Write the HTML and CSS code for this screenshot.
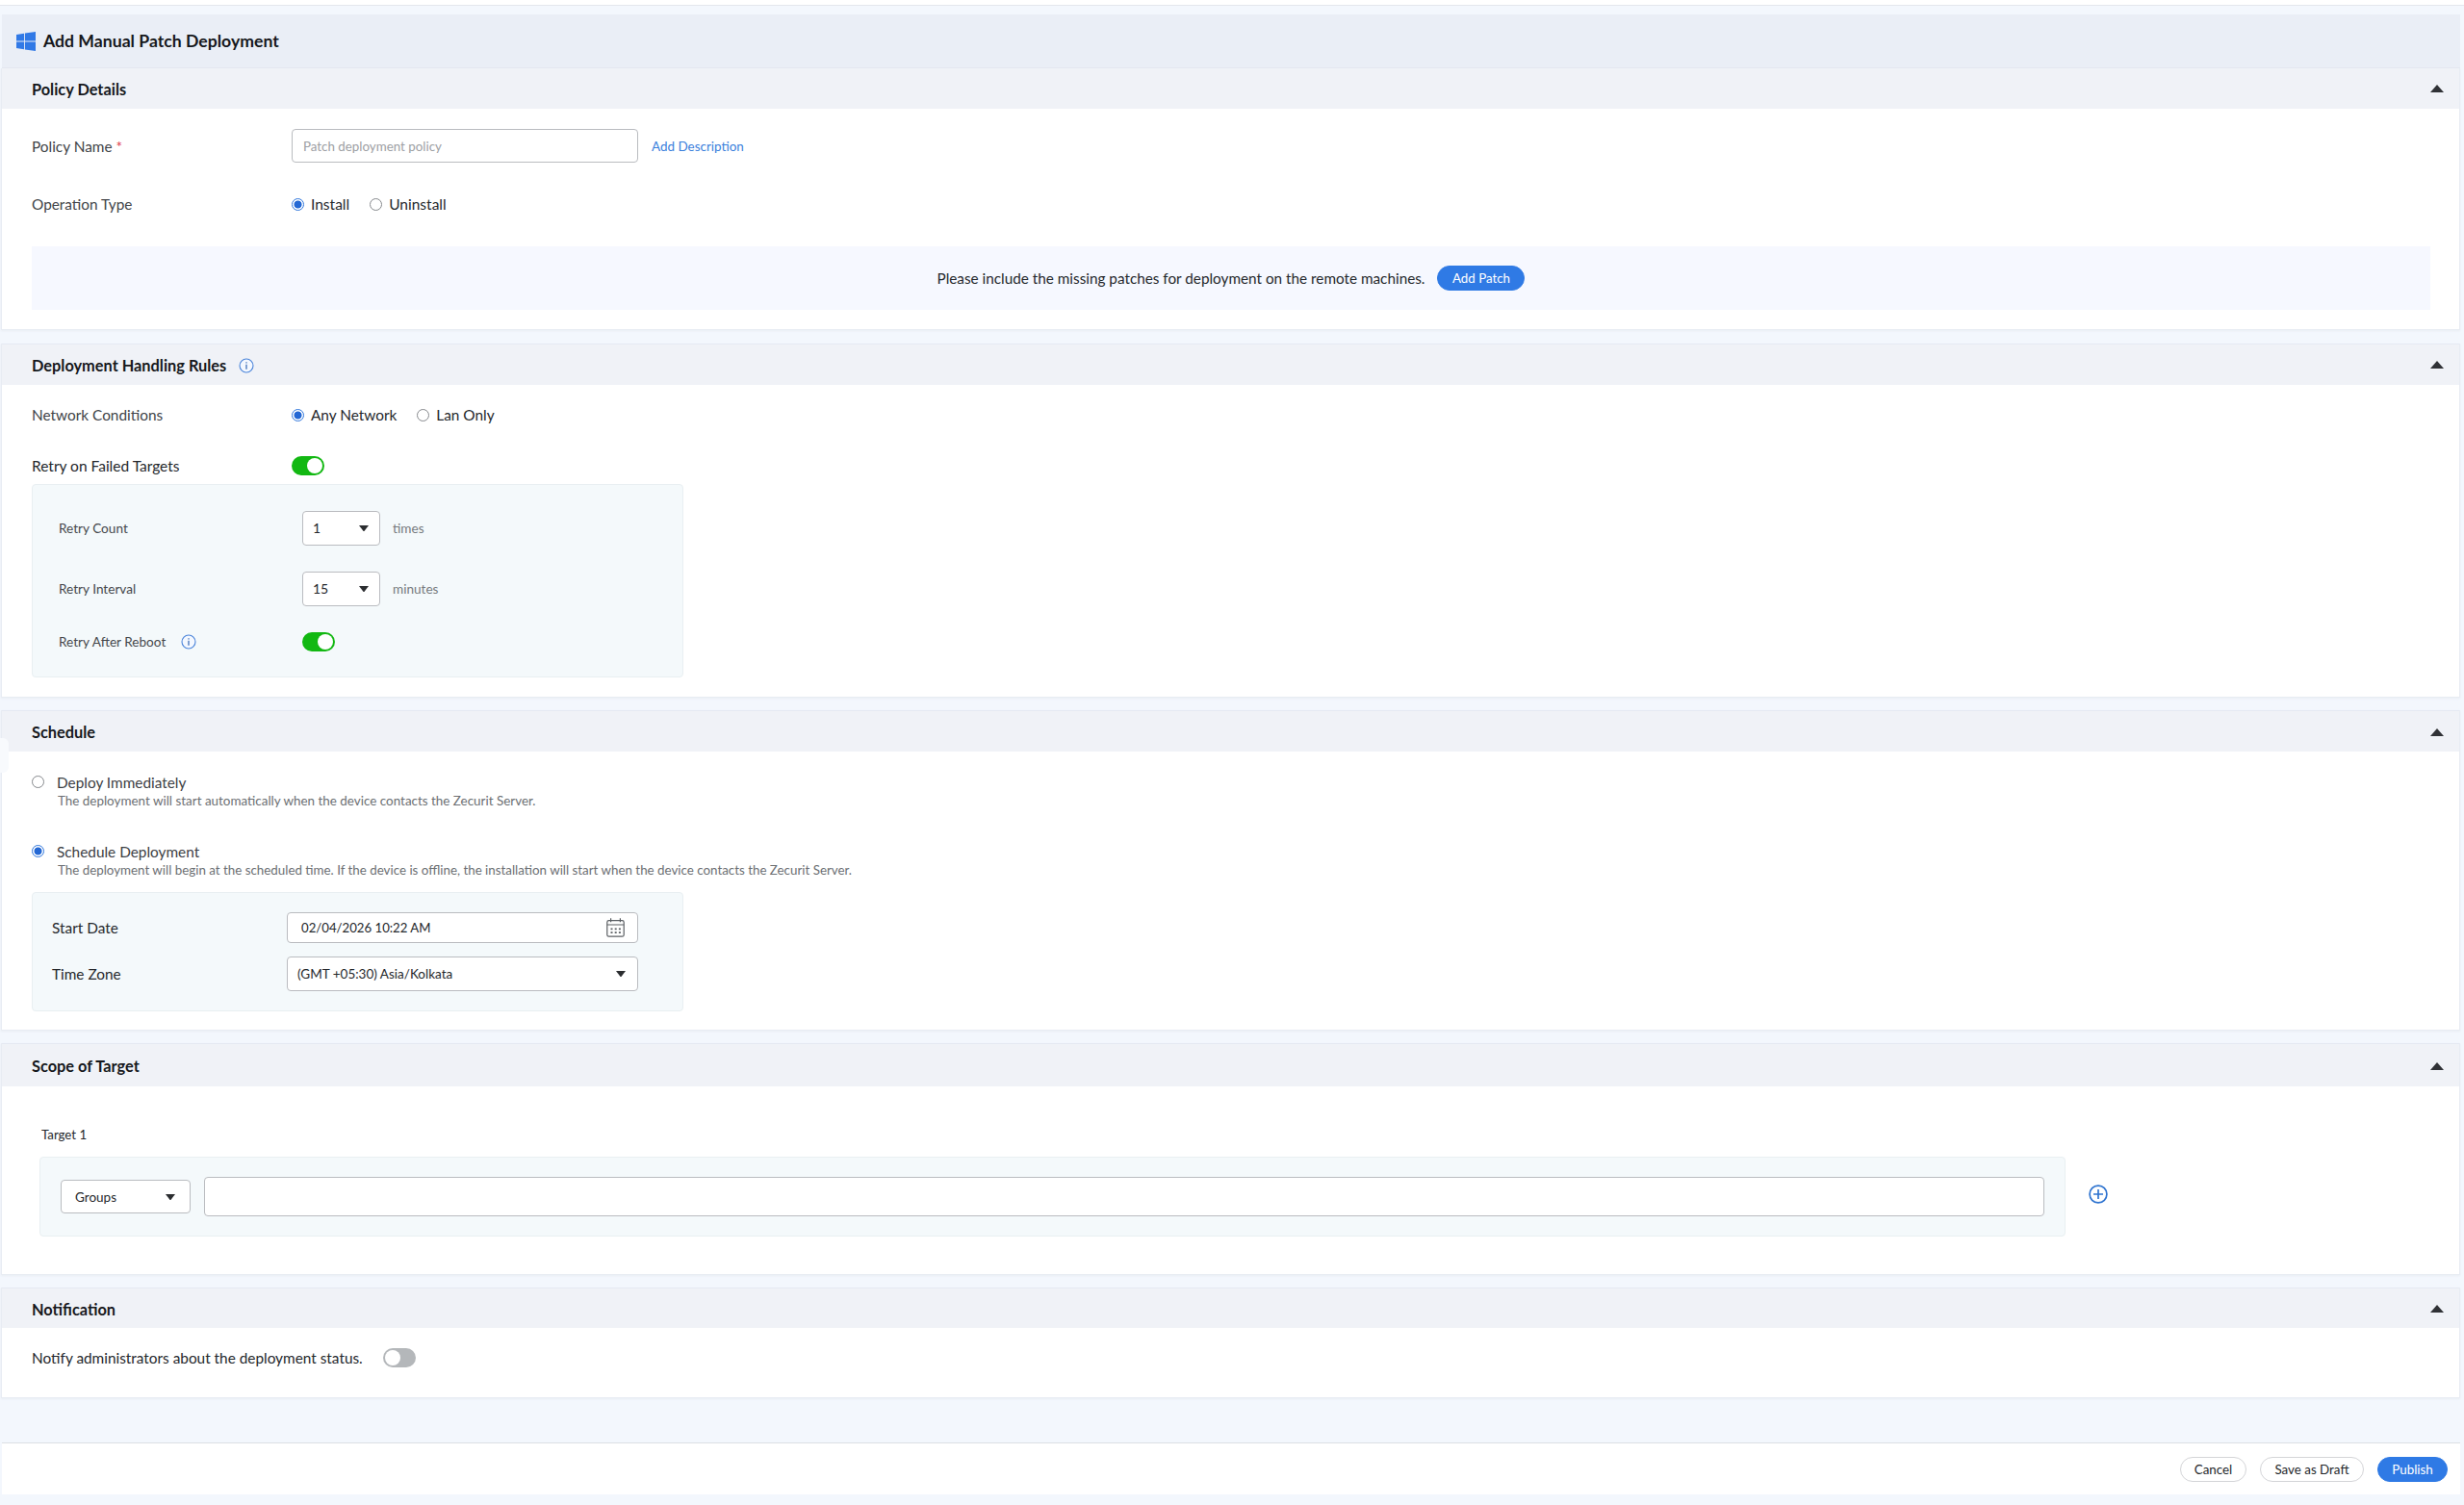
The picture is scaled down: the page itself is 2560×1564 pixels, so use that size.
FILE: index.html
```
<!DOCTYPE html>
<html lang="en">
<head>
<meta charset="utf-8">
<title>Add Manual Patch Deployment</title>
<link rel="stylesheet" href="styles.css">
</head>
<body>
<svg width="0" height="0" class="defs">
  <symbol id="info" viewBox="0 0 16 16"><circle cx="8" cy="8" r="7" fill="#f4f8ff" stroke="#4a84da" stroke-width="1.1"/><path d="M8 6.8v4.9M8 4.2v1.4" stroke="#3f6fb8" stroke-width="1.3"/></symbol>
  <symbol id="up" viewBox="0 0 14 8"><path d="M7 0 14 8H0z" fill="#303236"/></symbol>
  <symbol id="down" viewBox="0 0 10 6"><path d="M0 0h10L5.6 5.7a.8.8 0 0 1-1.2 0z" fill="#2b2d30"/></symbol>
</svg>
<div class="topline"></div>
<header class="title">
  <svg class="win" viewBox="0 0 20 20"><path fill="#3179e6" d="M0 2.900 8 1.700V9.500H0zM8.900 1.600 20 0v9.500H8.900zM0 10.400h8v7.900L0 17.100zM8.900 10.400H20V20L8.900 18.400z"/></svg>
  <h1>Add Manual Patch Deployment</h1>
</header>

<main>
  <section class="panel policy">
    <div class="head"><h2>Policy Details</h2><svg class="up"><use href="#up"/></svg></div>
    <div class="row name"><span class="label">Policy Name <b class="req">*</b></span><input class="field" placeholder="Patch deployment policy"><a class="link">Add Description</a></div>
    <div class="row type"><span class="label">Operation Type</span><span class="opt"><i class="radio on"></i>Install</span><span class="opt"><i class="radio"></i>Uninstall</span></div>
    <div class="banner"><span>Please include the missing patches for deployment on the remote machines.</span><button class="btn primary add">Add Patch</button></div>
  </section>

  <section class="panel rules">
    <div class="head"><h2>Deployment Handling Rules</h2><svg class="info"><use href="#info"/></svg><svg class="up"><use href="#up"/></svg></div>
    <div class="row net"><span class="label">Network Conditions</span><span class="opt"><i class="radio on"></i>Any Network</span><span class="opt"><i class="radio"></i>Lan Only</span></div>
    <div class="row retry"><span class="label dark">Retry on Failed Targets</span><i class="toggle on"></i></div>
    <div class="box retrybox">
      <div class="brow"><span class="blabel">Retry Count</span><div class="select num">1<svg class="down"><use href="#down"/></svg></div><span class="unit">times</span></div>
      <div class="brow"><span class="blabel">Retry Interval</span><div class="select num">15<svg class="down"><use href="#down"/></svg></div><span class="unit">minutes</span></div>
      <div class="brow reboot"><span class="blabel">Retry After Reboot<svg class="info"><use href="#info"/></svg></span><i class="toggle on"></i></div>
    </div>
  </section>

  <section class="panel schedule">
    <i class="handle"></i>
    <div class="head"><h2>Schedule</h2><svg class="up"><use href="#up"/></svg></div>
    <div class="choice"><i class="radio"></i><div><p class="ctitle">Deploy Immediately</p><p class="cdesc short">The deployment will start automatically when the device contacts the Zecurit Server.</p></div></div>
    <div class="choice"><i class="radio on"></i><div><p class="ctitle">Schedule Deployment</p><p class="cdesc">The deployment will begin at the scheduled time. If the device is offline, the installation will start when the device contacts the Zecurit Server.</p></div></div>
    <div class="box datebox">
      <div class="drow date"><span class="dlabel">Start Date</span><div class="select dt">02/04/2026 10:22 AM
        <svg class="cal" viewBox="0 0 19 20" fill="none" stroke="#5c6064"><rect x=".8" y="2.600" width="17.400" height="16.600" rx="1.800" stroke-width="1.200"/><path d="M.8 7h17.400M4.600.3v4M14.400.3v4" stroke-width="1.200"/><path d="M4.500 11.300h10.400M4.500 15.200h10.400" stroke-width="1.800" stroke-dasharray="2 2.200"/></svg></div></div>
      <div class="drow zone"><span class="dlabel">Time Zone</span><div class="select tz">(GMT +05:30) Asia/Kolkata<svg class="down"><use href="#down"/></svg></div></div>
    </div>
  </section>

  <section class="panel scope">
    <div class="head"><h2>Scope of Target</h2><svg class="up"><use href="#up"/></svg></div>
    <p class="target">Target 1</p>
    <div class="trow">
      <div class="box tbox"><div class="select groups">Groups<svg class="down"><use href="#down"/></svg></div><input class="field wide"></div>
      <svg class="plus" viewBox="0 0 20 20" fill="none" stroke="#2f74d0" stroke-width="1.700"><circle cx="10" cy="10" r="8.900"/><path d="M10 5v10M5 10h10"/></svg>
    </div>
  </section>

  <section class="panel notif">
    <div class="head"><h2>Notification</h2><svg class="up"><use href="#up"/></svg></div>
    <div class="row notify"><span>Notify administrators about the deployment status.</span><i class="toggle"></i></div>
  </section>
</main>

<footer class="foot"><button class="btn cancel">Cancel</button><button class="btn draft">Save as Draft</button><button class="btn primary publish">Publish</button></footer>
</body>
</html>
```
FILE: styles.css
```
* { box-sizing: border-box; }
body { margin: 0; height: 1564px; background: #f3f7fd; font: 400 15.36px/20px Lato, sans-serif; color: #25282c; overflow: hidden; }
h1, h2, p { margin: 0; }
svg { display: block; flex: none; }
i { display: block; flex: none; }
.defs { position: absolute; }

.topline { height: 6px; background: #fff; border-bottom: 1px solid #e4e7ec; margin-bottom: 9px; }
.title { display: flex; align-items: center; gap: 8px; width: 2554px; height: 56px; margin-left: 2px; padding: 1px 0 0 15px; background: #eaeef6; border-bottom: 1px solid #e3e7ef; }
.win { width: 20px; height: 20px; }
h1 { font-size: 17.65px; font-weight: 700; color: #16181c; }

main { display: flex; flex-direction: column; gap: 13px; width: 2555px; margin-left: 1px; }
.panel { position: relative; background: #fff; border: 1px solid #e8ecf3; border-top: 0; box-shadow: 0 1px 2px #e9edf3; padding-left: 31px; }
.head { display: flex; align-items: center; height: 43px; margin-left: -31px; padding: 2px 16px 0 31px; background: #f0f2f7; border-top: 1px solid #e5e9f2; }
h2 { font-size: 16.35px; font-weight: 700; color: #16181c; }
.up { width: 14px; height: 8px; margin: -1px 0 0 auto; }
.down { width: 10px; height: 6px; margin-left: auto; }
.info { width: 16px; height: 16px; }
.head .info { margin-left: 13px; }

.policy { height: 272px; }
.policy .head { height: 42px; padding-top: 0; border-top-color: #f0f2f7; }
.rules { height: 368px; margin-top: 1px; }
.rules .head { padding-top: 1px; }
.schedule { height: 333px; }
.scope { height: 241px; }
.scope .head { height: 45px; }
.notif { height: 115px; }
.notif .head { height: 42px; }

.row { display: flex; align-items: center; }
.label { width: 270px; color: #414448; }
.label.dark { color: #25282c; font-size: 15.500px; }
.req { color: #e0394a; font-weight: 400; }
.field { border: 1px solid #babcc0; border-radius: 4px; background: #fff; font: 13.35px Lato, sans-serif; }
.name { height: 35px; margin-top: 21px; }
.name .field { width: 360px; height: 35px; padding: 0 11px; }
.field::placeholder { color: #9da0a4; }
.link { margin-left: 14px; font-size: 13.45px; color: #3a80dc; }
.type { height: 20px; margin-top: 33px; }
.opt { display: flex; align-items: center; gap: 7px; margin-right: 21px; }
.type .opt { font-size: 15.500px; }
.radio { width: 13px; height: 13px; border: 1px solid #85888c; border-radius: 50%; background: #fff; }
.radio.on { border-color: #2f76dc; background: radial-gradient(#2468d4 3.6px, #fff 4.400px); }

.banner { display: flex; align-items: center; justify-content: center; gap: 13px; width: 2492px; height: 66px; margin-top: 34px; background: #f6f8ff; font-size: 15.300px; }
.btn { height: 26px; padding: 0; border: 1px solid #d4d5d8; border-radius: 13px; background: #fff; font: 13.35px/20px Lato, sans-serif; color: #25282c; }
.btn.primary { border-color: #2f7ae5; background: #2f7ae5; color: #fff; }
.add { width: 91px; }
.cancel { width: 69px; }
.draft { width: 108px; }
.publish { width: 73px; }

.net { height: 20px; margin-top: 21px; }
.retry { height: 20px; margin-top: 33px; }
.toggle { display: flex; width: 34px; height: 20px; border-radius: 10px; background: #b4b7ba; }
.toggle::before { content: ""; display: block; width: 16px; height: 16px; margin: 2px; border-radius: 50%; background: #fff; }
.toggle.on { background: #12b812; }
.toggle.on::before { margin-left: auto; }
.box { border: 1px solid #e9eff2; border-radius: 4px; background: #f4f9fb; }
.retrybox { width: 677px; height: 201px; margin-top: 9px; padding: 27px 0 0 27px; }
.brow { display: flex; align-items: center; height: 36px; margin-bottom: 27px; font-size: 13.6px; }
.brow.reboot { height: 20px; }
.blabel { display: flex; align-items: center; gap: 16px; width: 253px; color: #45484c; }
.select { display: flex; align-items: center; border: 1px solid #babcc0; border-radius: 4px; background: #fff; font-size: 13.500px; }
.num { width: 81px; height: 36px; padding: 0 11px 0 10px; font-size: 14px; }
.unit { margin-left: 13px; color: #76797d; }

.handle { position: absolute; left: -2px; top: 29px; width: 9px; height: 36px; border-radius: 0 6px 6px 0; background: #f8fafd; }
.choice { display: flex; height: 39px; gap: 13px; }
.head + .choice { margin: 22px 0 33px; }
.choice .radio { margin-top: 3px; }
.ctitle { color: #3d4044; line-height: 20px; }
.cdesc { margin-left: 1px; color: #6c6f73; font-size: 13.350px; line-height: 18px; }
.cdesc.short { font-size: 13.430px; }
.datebox { width: 677px; height: 124px; margin-top: 13px; padding: 20px 0 0 20px; }
.drow { display: flex; align-items: center; }
.dlabel { width: 244px; }
.date { margin-bottom: 14px; }
.dt { width: 365px; height: 32px; padding: 0 13px 0 14px; font-size: 13.200px; }
.cal { width: 19px; height: 20px; margin-left: auto; }
.tz { width: 365px; height: 36px; padding: 0 12px 0 10px; }

.target { margin: 40px 0 13px 10px; font-size: 13.250px; }
.trow { display: flex; align-items: center; margin-left: 8px; gap: 24px; }
.tbox { display: flex; align-items: center; gap: 14px; width: 2105px; height: 83px; padding-left: 21px; }
.groups { width: 135px; height: 35px; padding: 0 15px 0 14px; }
.wide { width: 1912px; height: 41px; }
.plus { width: 20px; height: 20px; margin-top: -5px; }
.notify { gap: 21px; margin-top: 21px; height: 20px; }

.foot { display: flex; align-items: flex-start; justify-content: flex-end; gap: 14px; width: 2554px; height: 54px; margin: 46px 0 0 2px; padding: 14px 13px 0 0; background: #fff; border-top: 1px solid #dcdfe4; }
```
